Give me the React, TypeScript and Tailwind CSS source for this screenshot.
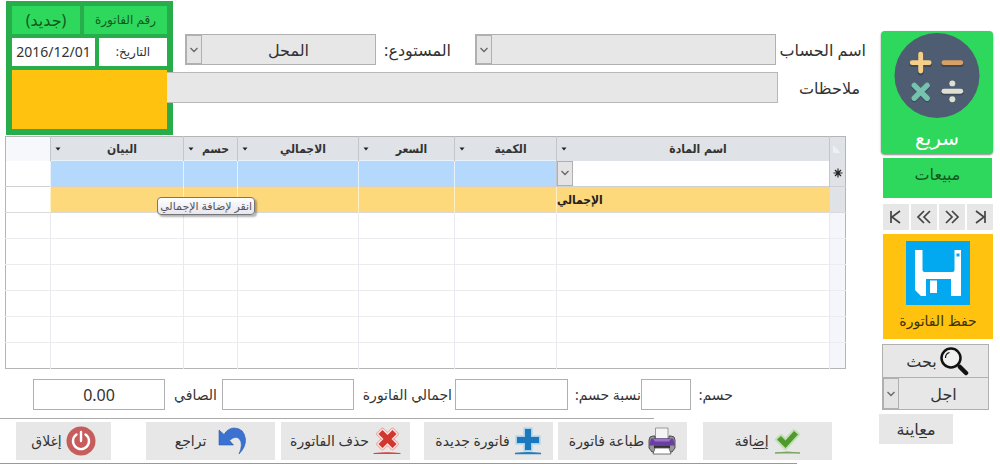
import type { ReactNode } from "react";

function Chevron() {
  return (
    <svg viewBox="0 0 10 6" className="h-1.5 w-2.5" fill="none" stroke="#666" strokeWidth="1.3">
      <path d="M1.5 1 5 4.5 8.5 1" />
    </svg>
  );
}

type ComboProps = { id: string; label?: string; value: string; className: string };

function Combo({ id, label, value, className }: ComboProps) {
  return (
    <div className={`grid ${className}`}>
      <select
        id={id}
        aria-label={label}
        className="col-start-1 row-start-1 h-full w-full min-w-0 appearance-none bg-transparent pl-4 text-center text-base text-[#333] outline-none"
      >
        <option>{value}</option>
      </select>
      <span className="pointer-events-none col-start-1 row-start-1 flex w-4 items-center justify-center justify-self-end border border-[#b0b0b0] bg-[#e4e4e4]">
        <Chevron />
      </span>
    </div>
  );
}

function CalculatorIcon() {
  return (
    <svg viewBox="0 0 86 86" className="size-[86px]" strokeLinecap="round" fill="none" strokeWidth="5">
      <circle cx="43" cy="43" r="43" fill="#4f5d73" />
      <g stroke="#3c485c" strokeWidth="6">
        <path d="M18 31.500h17M26.500 23v17M50 31.500h17M20 54l13 13M33 54 20 67M50 60h17" />
      </g>
      <path d="M18 30h17M26.500 21.500v17" stroke="#f5cf87" />
      <path d="M50 30h17" stroke="#d9a066" />
      <path d="M20 53l13 13M33 53 20 66" stroke="#76c2af" strokeWidth="5.500" />
      <path d="M50 59h17" stroke="#e0e0d1" />
      <circle cx="58.500" cy="51" r="3" fill="#e0e0d1" />
      <circle cx="58.500" cy="67" r="3" fill="#e0e0d1" />
    </svg>
  );
}

function FloppyIcon() {
  return (
    <svg viewBox="0 0 64 64" className="size-16">
      <path fill="#03a9f0" d="M0 0h64v64H0z" />
      <path fill="#fff" d="M9 9h7.500v20q0 2 2 2h28q2 0 2-2V9H55v46H45V38H20v17h-5l-6-6z" />
      <path fill="#fff" d="M24 39.500h7V52h-7z" />
      <path fill="#03a9f0" d="M50.500 12.500h3v3h-3z" />
    </svg>
  );
}

function SearchIcon() {
  return (
    <svg viewBox="0 0 30 30" className="size-[30px]" fill="none" stroke="#111">
      <circle cx="12" cy="12" r="9.500" strokeWidth="2.500" fill="#f0f0f0" />
      <path d="M6.500 12a5.500 5.500 0 0 1 4-5.500" strokeWidth="1.200" />
      <path d="m18.500 18.500 3 3" strokeWidth="2" />
      <path d="m21 21 6 6" strokeWidth="4.500" strokeLinecap="round" />
    </svg>
  );
}

function CheckIcon() {
  return (
    <svg viewBox="0 0 28 28" className="size-7">
      <path d="M4 12.500 8 9l4.500 4.500L21 4l4 3.500L12.500 21z" fill="#4f9a2f" stroke="#c2dfb3" strokeWidth="4" strokeLinejoin="round" />
      <path d="M4 12.500 8 9l4.500 4.500L21 4l4 3.500L12.500 21z" fill="#4f9a2f" />
      <path d="M2 26q12-2 25 0z" fill="#7da564" stroke="#7da564" />
    </svg>
  );
}

function PrinterIcon() {
  return (
    <svg viewBox="0 0 28 28" className="size-7">
      <path d="M7.500 1h12.500v11H7.500z" fill="#f4f4f4" stroke="#777" strokeWidth=".7" />
      <path d="M1 13q0-4 4-4h2v3h14V9h2q4 0 4 4v8l-3 4H4l-3-4z" fill="#999" stroke="#333" strokeWidth=".8" />
      <path d="M3 11.500h22l2 7H1z" fill="#6a3fa0" />
      <path d="M5 12h18l-2 2.500H7z" fill="#9873c6" />
      <path d="M6 18.500h16v2.500H6z" fill="#333" />
      <path d="M7 21h14l2 6H5z" fill="#fff" stroke="#555" strokeWidth=".8" />
    </svg>
  );
}

function PlusIcon() {
  return (
    <svg viewBox="0 0 28 28" className="size-7">
      <path d="M11 2h6v8h8v6h-8v7h-6v-7H3v-6h8z" fill="#1a78bd" stroke="#a9d0ea" strokeWidth="3" />
      <path d="M11 2h6v8h8v6h-8v7h-6v-7H3v-6h8z" fill="#1a78bd" />
      <path d="M1 26.500q13-1.500 26 0z" fill="#2a7db8" stroke="#2a7db8" strokeWidth="1.400" />
    </svg>
  );
}

function DeleteIcon() {
  return (
    <svg viewBox="0 0 28 28" className="size-7" strokeLinejoin="round">
      <path d="m9.500 3 5 5 5-5 4 4-5 5 5 5-4 4-5-5-5 5-4-4 5-5-5-5z" fill="#d1372f" stroke="#e9a09c" strokeWidth="4.500" />
      <path d="m9.500 3 5 5 5-5 4 4-5 5 5 5-4 4-5-5-5 5-4-4 5-5-5-5z" fill="#d1372f" stroke="#f6e2e1" strokeWidth="3" />
      <path d="m9.500 3 5 5 5-5 4 4-5 5 5 5-4 4-5-5-5 5-4-4 5-5-5-5z" fill="#d1372f" />
      <path d="M1 26.500q13-1.500 26 0z" fill="#cf4a44" stroke="#cf4a44" strokeWidth="1.200" />
    </svg>
  );
}

function UndoIcon() {
  return (
    <svg viewBox="0 0 28 28" className="size-7">
      <path d="M1 3v15h14.500l-4-4.500q6-5.500 10-1.500 4 5-.5 15 7-7 6.500-15Q26 1 16 1q-6 0-10 6.500z" fill="#3b72d1" stroke="#2b5bb3" strokeWidth=".6" />
    </svg>
  );
}

function PowerIcon() {
  return (
    <svg viewBox="0 0 30 30" className="size-[30px]" fill="none" stroke="#fff" strokeWidth="2.400" strokeLinecap="round">
      <circle cx="15" cy="15" r="14.500" fill="#c75c5c" stroke="none" />
      <path d="M10.500 8.500a8 8 0 1 0 9 0M15 6v9" />
    </svg>
  );
}

const navItems = [
  { label: "الأول", d: "M3 1v12M12 1 4 7l8 6" },
  { label: "السابق", d: "M8 1 2 7l6 6M14 1 8 7l6 6" },
  { label: "التالي", d: "m2 1 6 6-6 6M8 1l6 6-6 6" },
  { label: "الأخير", d: "M13 1v12M4 1l8 6-8 6" },
];

const columns = [
  { title: "اسم المادة", width: "w-[273px]" },
  { title: "الكمية", width: "w-[102px]" },
  { title: "السعر", width: "w-[96px]" },
  { title: "الاجمالي", width: "w-[121px]" },
  { title: "حسم", width: "w-[54px]" },
  { title: "البيان", width: "w-[133px]" },
];

const emptyRows = [0, 1, 2, 3, 4, 5];

const actions: { id: string; text: ReactNode; icon: ReactNode; className: string }[] = [
  { id: "add", text: <>إ<u className="underline-offset-2">ض</u>افة</>, icon: <CheckIcon />, className: "w-[129px] gap-1" },
  { id: "print", text: "طباعة فاتورة", icon: <PrinterIcon />, className: "mr-4 w-[129px] gap-1" },
  { id: "new", text: "فاتورة جديدة", icon: <PlusIcon />, className: "mr-[5px] w-[129px] gap-1" },
  { id: "delete", text: "حذف الفاتورة", icon: <DeleteIcon />, className: "mr-3.5 w-[129px] gap-1" },
  { id: "undo", text: "تراجع", icon: <UndoIcon />, className: "mr-1.5 w-[129px] gap-3" },
  { id: "close", text: "إغلاق", icon: <PowerIcon />, className: "mr-[35px] w-[95px] gap-1" },
];

function InvoiceHeader() {
  return (
    <div className="flex pl-1.5">
      <div className="flex min-w-0 flex-1 flex-col gap-[7px] pt-[33px]">
        <div className="flex h-[31px] items-center pl-3">
          <label htmlFor="account" className="w-[94px] shrink-0 whitespace-nowrap pr-1">اسم الحساب</label>
          <Combo id="account" value="" className="h-full min-w-0 flex-1 border border-[#b0b0b0] bg-[#e7e7e7]" />
          <label htmlFor="store" className="w-[99px] shrink-0 whitespace-nowrap pr-6">المستودع:</label>
          <Combo id="store" value="المحل" className="h-full w-[191px] shrink-0 border border-[#b0b0b0] bg-[#e7e7e7]" />
        </div>
        <div className="flex h-[31px] items-center">
          <label htmlFor="notes" className="w-[92px] shrink-0 pr-2.5">ملاحظات</label>
          <input id="notes" className="relative -ml-1.5 h-full min-w-0 flex-1 border border-l-0 border-[#b8b8b8] bg-[#e7e7e7] px-2 outline-none" />
        </div>
      </div>
      <div className="flex w-[167px] shrink-0 flex-col gap-1 bg-[#27ae4b] p-1.5 pt-[5px]">
        <div className="flex h-7 gap-1">
          <div className="flex w-[83px] items-center justify-center bg-[#2ed85c] text-xs text-[#14591f]">رقم الفاتورة</div>
          <div className="flex flex-1 items-center justify-center bg-[#2ed85c] text-base text-[#14591f]">(جديد)</div>
        </div>
        <div className="flex h-7 gap-1">
          <label htmlFor="date" className="flex w-[68px] items-center justify-center bg-white text-xs">التاريخ:</label>
          <input id="date" dir="ltr" defaultValue="2016/12/01" className="min-w-0 flex-1 bg-white text-center text-sm outline-none" />
        </div>
        <div className="h-[59px] bg-[#fec20f]" />
      </div>
    </div>
  );
}

function ItemsTable() {
  return (
    <div className="relative mr-6 ml-1.5 mt-px">
      <table className="w-full table-fixed border-collapse border border-[#b5b5b5] font-['DejaVu_Sans_Condensed','DejaVu_Sans',sans-serif]">
        <thead>
          <tr className="h-6 bg-[#dfe2e6]">
            <th className="w-4 p-0" aria-label="تحديد">
              <svg viewBox="0 0 16 20" className="h-5 w-4"><path d="M4 6v8h8z" fill="#eef0f2" /></svg>
            </th>
            {columns.map((column) => (
              <th key={column.title} className={`border-x border-[#c3c6ca] p-0 text-xs font-bold leading-5 text-[#333] ${column.width}`}>
                <div className="flex items-center pl-1">
                  <span className="flex-1 whitespace-nowrap">{column.title}</span>
                  <button aria-label={`فرز ${column.title}`} className="flex h-3 w-1.5 items-center">
                    <svg viewBox="0 0 6 4" className="h-1 w-1.5"><path d="M.5.500h5L3 3.500z" fill="#222" /></svg>
                  </button>
                </div>
              </th>
            ))}
            <th className="w-[45px] bg-[#f7f8fc]" aria-label="فارغ" />
          </tr>
        </thead>
        <tbody>
          <tr className="h-[26px] border-b border-[#d0d0d0]">
            <td className="bg-[#dfe2e6] p-0 text-center">
              <svg viewBox="0 0 10 10" className="mx-auto size-2.5" stroke="#222" strokeWidth="1.200">
                <path d="M5 .5v9M.5 5h9M2 2l6 6M8 2 2 8" />
              </svg>
            </td>
            <td className="border-x border-[#c3c6ca] bg-white p-0">
              <Combo id="item" label="اسم المادة" value="" className="h-[25px]" />
            </td>
            {columns.slice(1).map((column) => (
              <td key={column.title} className="border-x border-t border-[#e9f2fb] bg-[#b5d8fd]" />
            ))}
            <td />
          </tr>
          <tr className="h-[26px] border-b border-[#d9d9d9]">
            <td className="bg-[#dfe2e6]" />
            <td className="bg-[#fed97c] p-0 text-left text-xs font-bold leading-5 text-[#222]">الإجمالي</td>
            {columns.slice(1).map((column) => (
              <td key={column.title} className="border-x border-[#fdf0c8] bg-[#fed97c]" />
            ))}
            <td />
          </tr>
          {emptyRows.map((row) => (
            <tr key={row} className="h-[26px] border-t border-[#ececf0]">
              <td className="bg-[#f5f5fc]" />
              {columns.map((column) => (
                <td key={column.title} className="border-x border-[#e9e9f2]" />
              ))}
              <td />
            </tr>
          ))}
        </tbody>
      </table>
      <div role="tooltip" className="absolute left-[18%] top-[61px] whitespace-nowrap rounded-sm border border-[#767676] bg-gradient-to-b from-white to-[#e6e6f0] px-0.5 text-[11px] leading-4 text-[#555] shadow-[2px_2px_2px_rgba(0,0,0,0.3)]">
        انقر لإضافة الإجمالي
      </div>
    </div>
  );
}

function Totals() {
  const box = "h-[31px] shrink-0 border border-[#b0b0b0] bg-white text-center outline-none";
  return (
    <div className="mt-2.5 flex items-center whitespace-nowrap pr-[137px] text-sm">
      <label htmlFor="discount" className="w-[42px]">حسم:</label>
      <input id="discount" className={`w-[50px] ${box}`} />
      <label htmlFor="rate" className="w-[73px]">نسبة حسم:</label>
      <input id="rate" className={`w-[113px] ${box}`} />
      <label htmlFor="total" className="w-[101px] pr-[3px]">اجمالي الفاتورة</label>
      <input id="total" className={`w-[132px] ${box}`} />
      <label htmlFor="net" className="w-[57px] pr-[5px]">الصافي</label>
      <input id="net" defaultValue="0.00" className={`w-[132px] text-base ${box}`} />
    </div>
  );
}

function Sidebar() {
  return (
    <aside className="flex w-28 shrink-0 flex-col pt-[31px]">
      <button className="flex h-[123px] flex-col items-center gap-1 rounded-sm bg-[#2ed85c] pt-0.5 text-xl leading-8 text-white shadow-[0_1px_2px_#888]">
        <CalculatorIcon />
        سريع
      </button>
      <button className="mr-px ml-0.5 mt-1 h-10 bg-[#2ed85c] pb-2 text-[#14591f]">مبيعات</button>
      <nav dir="ltr" className="mt-1.5 ml-0.5 grid grid-cols-4 gap-0.5">
        {navItems.map((item) => (
          <button key={item.label} aria-label={item.label} className="flex h-[26px] items-center justify-center bg-[#e7e7e7]">
            <svg viewBox="0 0 16 14" className="h-3.5 w-4" fill="none" stroke="#444" strokeWidth="1.700"><path d={item.d} /></svg>
          </button>
        ))}
      </nav>
      <button className="mt-1 ml-0.5 flex h-[105px] flex-col items-center whitespace-nowrap bg-[#fec20f] pt-[7px] text-sm leading-8 text-[#3d3008]">
        <FloppyIcon />
        حفظ الفاتورة
      </button>
      <button className="mr-1 ml-px mt-[5px] flex h-[34px] items-center justify-center gap-0.5 border border-[#b0b0b0] bg-[#e7e7e7] pl-1">
        <SearchIcon />
        بحث
      </button>
      <Combo id="payment" label="طريقة الدفع" value="اجل" className="mr-1 ml-px h-8 border border-t-0 border-[#b0b0b0] bg-[#e7e7e7]" />
      <button className="mt-1 -ml-0.5 h-[30px] w-[74px] self-end bg-[#e7e7e7]">م<u className="underline-offset-2">ع</u>اينة</button>
    </aside>
  );
}

export default function App() {
  return (
    <div dir="rtl" className="flex min-h-screen gap-[11px] bg-white pr-[7px] font-['Noto_Sans','DejaVu_Sans',sans-serif] text-base text-[#333]">
      <Sidebar />
      <main className="flex min-w-0 flex-1 flex-col pt-px">
        <InvoiceHeader />
        <ItemsTable />
        <Totals />
        <hr className="mr-[216px] mt-2 border-[#aaa]" />
        <div className="mt-[3px] flex pr-[38px]">
          {actions.map((action) => (
            <button
              key={action.id}
              className={`flex h-[38px] shrink-0 items-center justify-center whitespace-nowrap bg-[#e7e7e7] text-sm ${action.className}`}
            >
              {action.icon}
              <span>{action.text}</span>
            </button>
          ))}
        </div>
        <hr className="mr-[73px] mt-[3px] border-[#999]" />
      </main>
    </div>
  );
}
